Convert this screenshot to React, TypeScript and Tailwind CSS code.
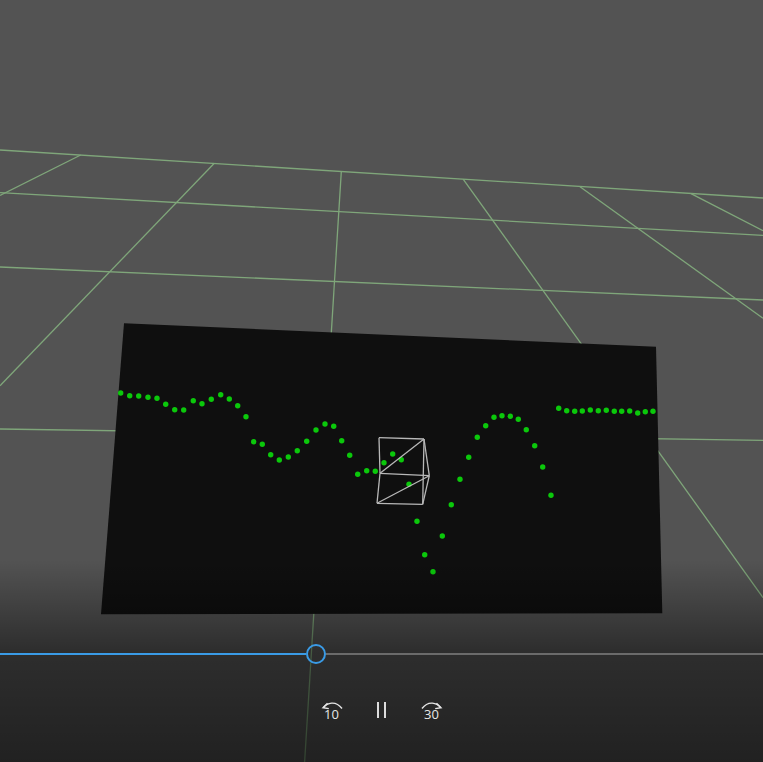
import React from 'react';

const gridLines = [
  [0, 150, 763, 198],
  [0, 192.7, 763, 235.3],
  [0, 267, 763, 300],
  [0, 429, 763, 440.3],
  [80.7, 155, 0, 195.5],
  [214.3, 163.3, 0, 385.7],
  [341.3, 171.7, 304.6, 762],
  [463.3, 179.3, 763, 597.5],
  [580, 186.7, 763, 318.3],
  [691, 193.7, 763, 230.7],
];

const dots = [
  [120.7, 393], [129.7, 395.7], [138.7, 396], [148, 397.3], [157, 398.3], [165.7, 404.3], [174.7, 409.7], [183.7, 410],
  [193.3, 400.7], [202, 403.7], [211.3, 399.3], [220.7, 394.7], [229.3, 399], [237.7, 405.7], [246, 416.7], [253.7, 441.7],
  [262.3, 444.3], [270.7, 454.7], [279.3, 460], [288.3, 457], [297.3, 450.7], [306.7, 441.3], [316, 430], [325, 424],
  [333.7, 426.3], [341.7, 440.7], [349.7, 455.3], [357.7, 474.3], [366.7, 470.7], [375.3, 471.3], [384, 462.7], [392.7, 454],
  [401.3, 459.7], [409, 484.3], [417, 521.3], [424.7, 554.7], [433, 571.7], [442.3, 536], [451.3, 504.7], [460, 479.3],
  [468.7, 457.3], [477.3, 437.3], [485.7, 425.7], [494, 417.3], [502, 415.7], [510.3, 416.3], [518.3, 419.3], [526.3, 429.7],
  [534.7, 445.7], [542.7, 467], [551, 495.3], [558.7, 408.3], [566.7, 410.7], [574.7, 411.3], [582.3, 411], [590.3, 410],
  [598.3, 410.7], [606.3, 410.3], [614.3, 411.3], [621.7, 411.3], [629.7, 411], [637.7, 413], [645.3, 411.7], [653, 411.3],
];

const cubeEdges = [
  [379, 437.7, 424, 439],
  [379, 437.7, 380, 473.3],
  [380, 473.3, 424, 439],
  [380, 473.3, 429.3, 475.7],
  [424, 439, 429.3, 475.7],
  [424, 439, 422.7, 504.3],
  [380, 473.3, 377, 503.3],
  [377, 503.3, 422.7, 504.3],
  [377, 503.3, 429.3, 475.7],
  [429.3, 475.7, 422.7, 504.3],
];

const SkipButton: React.FC<{ label: string; forward?: boolean }> = ({ label, forward }) => (
  <div className="flex w-[50px] flex-col items-center">
    <svg width="22" height="10" viewBox="0 0 22 10" fill="none" stroke="#e6e6e6" strokeWidth="1.4" className={forward ? '-scale-x-100' : ''}>
      <path d="M2.5 6.5 C6 2 14.5 -1 21 7.5" />
      <path d="M6.5 2.2 L2 6.7 L7.8 7.6" />
    </svg>
    <span className="mt-[-3px] text-[13px] leading-[12px] text-[#e6e6e6]">{label}</span>
  </div>
);

const App: React.FC = () => {
  return (
    <div className="relative h-[762px] w-[763px] overflow-hidden bg-[#535353] font-['Open_Sans',sans-serif]">
      <svg className="absolute inset-0" width="763" height="762" viewBox="0 0 763 762">
        {gridLines.map(([x1, y1, x2, y2], i) => (
          <line key={i} x1={x1} y1={y1} x2={x2} y2={y2} stroke="#7fa67a" strokeWidth="1.3" />
        ))}
        <polygon points="124,323.3 656,346.7 662.3,613.3 101,614.3" fill="#0f0f0f" />
        {dots.map(([cx, cy], i) => (
          <circle key={i} cx={cx} cy={cy} r="2.7" fill="#0bc80b" />
        ))}
        {cubeEdges.map(([x1, y1, x2, y2], i) => (
          <line key={i} x1={x1} y1={y1} x2={x2} y2={y2} stroke="#b8b8b8" strokeWidth="1.3" />
        ))}
      </svg>

      <div className="absolute inset-x-0 bottom-0 flex h-[202px] flex-col justify-end bg-linear-to-b from-transparent via-black/45 via-[45%] to-black/60 pb-[42px]">
        <div className="flex h-5 items-center">
          <div className="h-0.5 w-[306px] bg-[#3a9be6]" />
          <div className="h-5 w-5 rounded-full border-2 border-[#3a9be6]" />
          <div className="h-0.5 flex-1 bg-[#6b6b6b]" />
        </div>
        <div className="mt-[37px] flex items-start justify-center">
          <SkipButton label="10" />
          <div className="mt-px flex h-[16px] w-[50px] justify-center gap-[5px]">
            <div className="h-full w-0.5 bg-[#dcdcdc]" />
            <div className="h-full w-0.5 bg-[#dcdcdc]" />
          </div>
          <SkipButton label="30" forward />
        </div>
      </div>
    </div>
  );
};

export default App;
